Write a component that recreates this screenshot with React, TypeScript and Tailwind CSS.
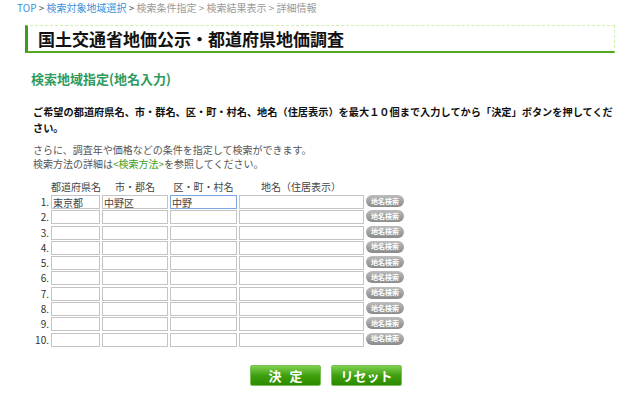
import { useState } from 'react';

const font = { fontFamily: '"Noto Sans CJK JP", "Noto Sans", "Liberation Sans", sans-serif' };

const initial = [
  ['東京都', '中野区', '中野', ''],
  ...Array.from({ length: 9 }, () => ['', '', '', '']),
];

export default function App() {
  const [rows, setRows] = useState(initial);

  const setCell = (r: number, c: number, v: string) => {
    setRows(rows.map((row, i) => (i === r ? row.map((x, j) => (j === c ? v : x)) : row)));
  };

  return (
    <main className="w-[640px] h-[420px] bg-white text-[#222]" style={font}>
      <div className="pl-[17px] pt-[1px] h-[25px] text-[10px] leading-[14px] text-[#999]">
        <span className="text-[#3b8fd9]">TOP</span>
        <span className="text-[#555]"> &gt; </span>
        <span className="text-[#3b8fd9]">検索対象地域選択</span>
        <span className="text-[#555]"> &gt; </span>
        検索条件指定
        <span> &gt; </span>
        検索結果表示
        <span> &gt; </span>
        詳細情報
      </div>

      <div className="ml-[25px] w-[590px] h-[28px] border-t border-r border-dashed border-[#cdf2a8] border-l-[3px] border-l-[#3c9d1a] border-b-2 border-b-[#55aa22] flex items-center pl-[10px]" style={{ borderLeftStyle: 'solid', borderBottomStyle: 'solid' }}>
        <h1 className="text-[17px] font-bold leading-none text-[#111]">国土交通省地価公示・都道府県地価調査</h1>
      </div>

      <h2 className="ml-[31px] mt-[17px] text-[13px] font-bold leading-[18px] text-[#2f9a5e]">検索地域指定(地名入力)</h2>

      <p className="ml-[33px] mt-[16px] w-[586px] text-[10.2px] font-bold leading-[16px] text-[#111]">
        ご希望の都道府県名、市・群名、区・町・村名、地名（住居表示）を最大１０個まで入力してから「決定」ボタンを押してください。
      </p>

      <div className="ml-[33px] mt-[7px] text-[10px] leading-[14px] text-[#555]">
        <div>さらに、調査年や価格などの条件を指定して検索ができます。</div>
        <div>
          検索方法の詳細は<span className="text-[#3a9d1c]">&lt;検索方法&gt;</span>を参照してください。
        </div>
      </div>

      <div className="ml-[33px] mt-[7px] text-[10px] text-[#444]">
        <div className="flex h-[17px] items-center leading-none">
          <div className="w-[18px]" />
          <div className="w-[50px] text-center">都道府県名</div>
          <div className="w-[68px] text-center">市・郡名</div>
          <div className="w-[69px] text-center">区・町・村名</div>
          <div className="w-[126px] text-center">地名（住居表示）</div>
        </div>
        {rows.map((row, i) => (
          <div key={i} className="flex h-[15.3px] items-start">
            <div className="w-[17px] pr-[1px] text-right text-[10px] leading-[14px] text-[#333]">{i + 1}.</div>
            <input
              className="ml-[1px] w-[49px] h-[14px] border border-[#c4c4c4] px-[1px] text-[10px] leading-none outline-none"
              value={row[0]}
              onChange={(e) => setCell(i, 0, e.target.value)}
            />
            <input
              className="ml-[2px] w-[66px] h-[14px] border border-[#c4c4c4] px-[1px] text-[10px] leading-none outline-none"
              value={row[1]}
              onChange={(e) => setCell(i, 1, e.target.value)}
            />
            <input
              className={`ml-[2px] w-[67px] h-[14px] border px-[1px] text-[10px] leading-none outline-none ${i === 0 ? 'border-[#7aa7e0]' : 'border-[#c4c4c4]'}`}
              value={row[2]}
              onChange={(e) => setCell(i, 2, e.target.value)}
            />
            <input
              className="ml-[2px] w-[125px] h-[14px] border border-[#c4c4c4] px-[1px] text-[10px] leading-none outline-none"
              value={row[3]}
              onChange={(e) => setCell(i, 3, e.target.value)}
            />
            <button className="ml-[2px] w-[38px] h-[12px] rounded-full bg-gradient-to-b from-[#bdbdbd] to-[#8a8a8a] text-[7px] leading-none font-bold text-white">
              地名検索
            </button>
          </div>
        ))}
      </div>

      <div className="mt-[17px] flex justify-center gap-[10px] pl-[12px]">
        <button className="w-[71px] h-[21px] rounded-[2px] border border-[#7cc05a] bg-gradient-to-b from-[#7ed04a] via-[#3fa00c] to-[#2c8a00] text-[13px] font-bold leading-none text-white tracking-[0.6em] pl-[0.6em]">
          決定
        </button>
        <button className="w-[71px] h-[21px] rounded-[2px] border border-[#7cc05a] bg-gradient-to-b from-[#7ed04a] via-[#3fa00c] to-[#2c8a00] text-[13px] font-bold leading-none text-white">
          リセット
        </button>
      </div>
    </main>
  );
}
